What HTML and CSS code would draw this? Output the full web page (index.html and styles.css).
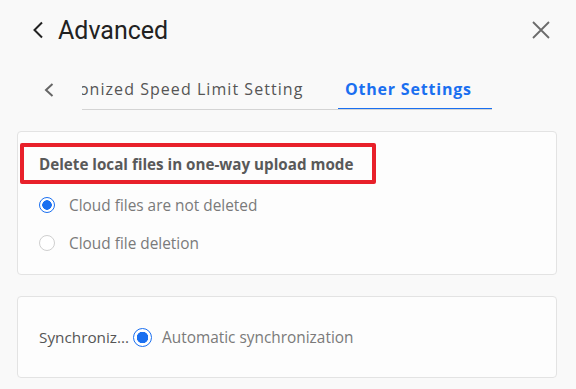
FILE: index.html
```html
<!DOCTYPE html>
<html lang="en">
<head>
<meta charset="UTF-8">
<meta name="viewport" content="width=device-width, initial-scale=1.0">
<title>Advanced</title>
<link rel="stylesheet" href="styles.css">
</head>
<body>
<!-- header -->
<div class="header">
    <div class="header-left">
        <svg class="back-icon" width="12" height="18" viewBox="0 0 12 18"><path d="M10 1.5 L2.5 9 L10 16.5" fill="none" stroke="#222" stroke-width="2"/></svg>
        <span class="header-title">Advanced</span>
    </div>
    <svg class="close-icon" width="18" height="18" viewBox="0 0 18 18"><path d="M1 1 L17 17 M17 1 L1 17" fill="none" stroke="#6b6b6b" stroke-width="1.8"/></svg>
</div>

<!-- tabs -->
<div class="tabs">
    <svg class="tab-prev" width="10" height="14" viewBox="0 0 10 14"><path d="M8.5 1 L2 7 L8.5 13" fill="none" stroke="#666" stroke-width="2"/></svg>
    <div class="tab-strip">
        <div class="tab-list">
            <div class="tab tab-first">Synchronized Speed Limit Setting</div>
            <div class="tab tab-active">Other Settings</div>
        </div>
    </div>
</div>

<!-- content -->
<div class="panel">
    <div class="card card-main">
        <div class="card-title">Delete local files in one-way upload mode</div>
        <div class="radio-group">
            <label class="radio-item"><span class="radio checked"></span>Cloud files are not deleted</label>
            <label class="radio-item"><span class="radio"></span>Cloud file deletion</label>
        </div>
    </div>
    <div class="card card-row">
        <span class="row-label">Synchroniz...</span>
        <label class="radio-item radio-inline"><span class="radio checked"></span>Automatic synchronization</label>
    </div>
</div>
</body>
</html>
```

FILE: styles.css
```css
/* base */
body, html {
    margin: 0;
    padding: 0;
    background: #f9f9f9;
    font-family: 'Open Sans', 'Noto Sans', sans-serif;
}

/* header */
.header {
    display: flex;
    justify-content: space-between;
    align-items: center;
    height: 60px;
    padding: 0 26px 0 32px;
}

.header-left {
    display: flex;
    align-items: center;
    gap: 14px;
}

.header-title {
    font-family: Roboto, sans-serif;
    font-size: 25px;
    color: #222;
}

/* tabs */
.tabs {
    display: flex;
    align-items: flex-end;
    height: 50px;
    padding-left: 44px;
}

.tab-prev {
    margin: 0 28px 13px 0;
}

.tab-strip {
    width: 410px;
    overflow: hidden;
    border-bottom: 1px solid #d4d4d4;
}

.tab-list {
    display: flex;
    white-space: nowrap;
}

.tab {
    font-size: 16px;
    letter-spacing: 0.8px;
    color: #555;
    padding: 0 0 8px;
    border-bottom: 2px solid transparent;
    margin-bottom: -1px;
    box-sizing: border-box;
}

.tab-first {
    margin-left: -60px;
    width: 316px;
    flex: none;
    letter-spacing: 1.05px;
}

.tab-active {
    color: #1a6ff0;
    font-weight: 700;
    padding-left: 7px;
    width: 154px;
    flex: none;
    border-bottom-color: #1a6ff0;
}

/* cards */
.panel {
    display: flex;
    flex-direction: column;
    gap: 21px;
    width: 540px;
    margin: 21px 0 0 17px;
}

.card {
    background: #fdfdfd;
    border: 1px solid #e3e3e3;
    border-radius: 4px;
    box-sizing: border-box;
}

.card-main {
    height: 144px;
    padding: 11px 2px 0;
}

.card-title {
    width: 356px;
    height: 41px;
    box-sizing: border-box;
    border: 4px solid #e8202a;
    border-radius: 2px;
    padding-left: 15px;
    display: flex;
    align-items: center;
    font-size: 15.2px;
    font-weight: 700;
    color: #595959;
}

.radio-group {
    display: flex;
    flex-direction: column;
    gap: 18px;
    padding: 11px 0 0 19px;
}

.radio-item {
    display: flex;
    align-items: center;
    gap: 14px;
    font-size: 15.4px;
    color: #7a7a7a;
    height: 20px;
}

.radio {
    width: 16px;
    height: 16px;
    border: 1px solid #cfcfcf;
    border-radius: 50%;
    box-sizing: border-box;
    background: #fff;
    flex: none;
}

.radio.checked {
    border: 1.5px solid #1a6ff0;
    background: radial-gradient(circle, #1a6ff0 0 4.5px, #fff 5px);
}

.card-row {
    height: 82px;
    display: flex;
    align-items: center;
    padding-left: 21px;
}

.row-label {
    width: 94px;
    flex: none;
    font-size: 15.3px;
    color: #555;
    white-space: nowrap;
}

.radio-inline {
    gap: 10px;
}

.radio-inline .radio {
    width: 19px;
    height: 19px;
    background: radial-gradient(circle, #1a6ff0 0 5.5px, #fff 6px);
}
```
